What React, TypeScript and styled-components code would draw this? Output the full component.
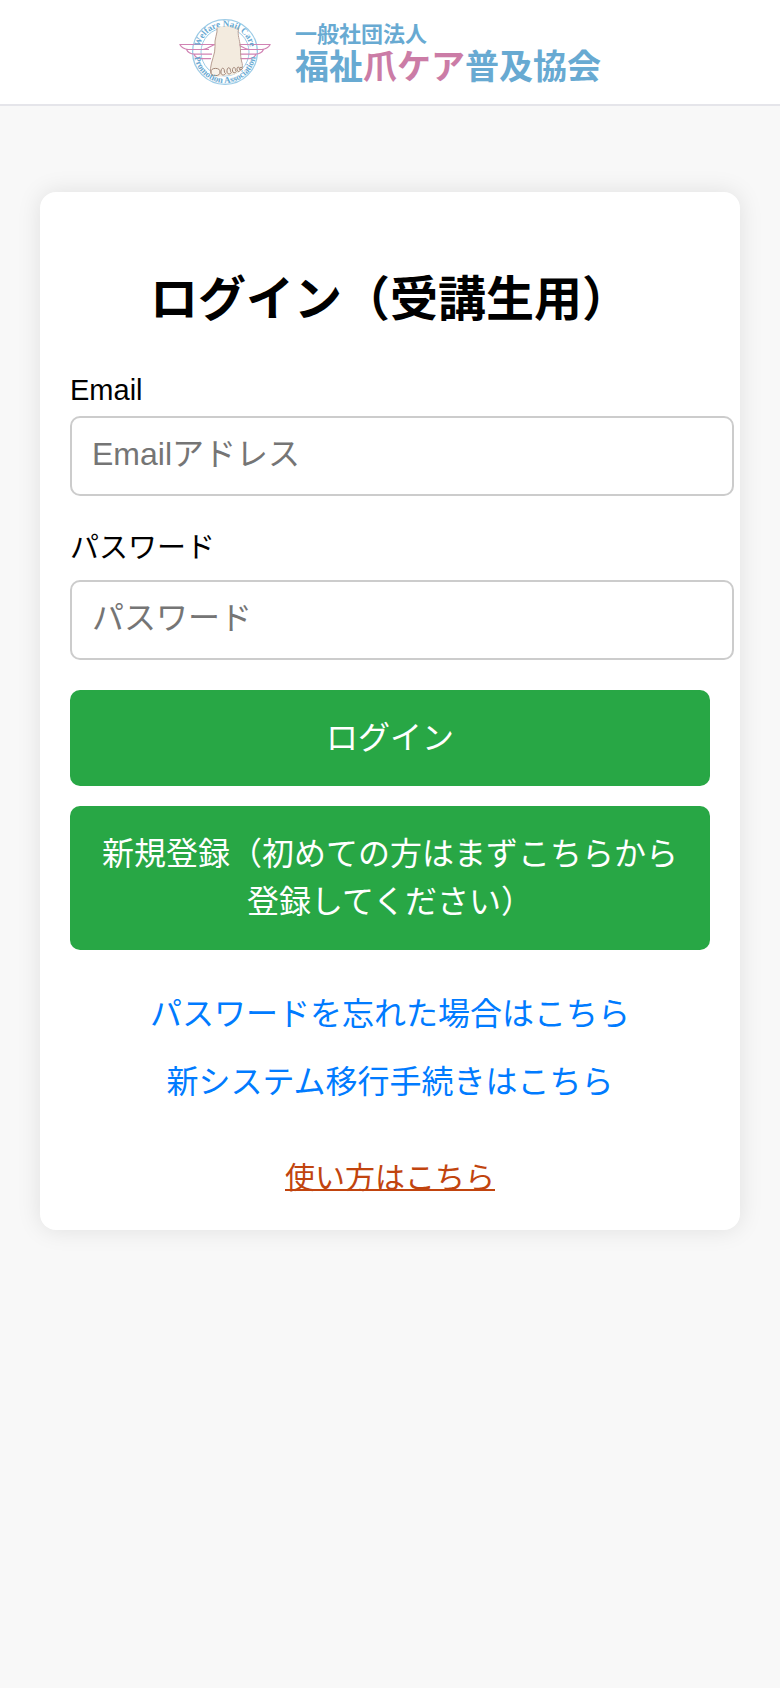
import React, { useState } from 'react';
import styled, { createGlobalStyle, css } from 'styled-components';

const GlobalStyle = createGlobalStyle`
	body {
		margin: 0;
		background-color: #f8f8f8;
		color: #000;
		font-family: 'Liberation Sans', 'Noto Sans CJK JP', sans-serif;
	}
`;

const Header = styled.header`
	display: flex;
	align-items: center;
	justify-content: center;
	gap: 24px;

	padding: 18px 20px;

	background-color: #fff;
	border-bottom: 2px solid #e5e5ea;
`;

const Mark = styled.svg`
	width: 92px;
	height: 68px;
	flex-shrink: 0;
`;

const RingText = styled.text`
	fill: #68a9d2;
	font-family: 'Liberation Serif', serif;
	font-size: 9px;
	font-weight: bold;
`;

const Organization = styled.div`
	padding-top: 4px;

	color: #68aad2;
	font-weight: bold;
	white-space: nowrap;
`;

const OrganizationType = styled.div`
	font-size: 22px;
	line-height: 26px;
`;

const OrganizationName = styled.div`
	font-size: 34px;
	line-height: 38px;
`;

const Accent = styled.span`
	color: #cb7ca6;
`;

const Card = styled.main`
	margin: 86px 40px 40px;
	padding: 72px 30px 28px;

	background-color: #fff;
	border-radius: 16px;
	box-shadow: 0 0 24px rgba(0, 0, 0, 0.1);
`;

const Title = styled.h1`
	margin: 0 0 38px;

	font-size: 48px;
	line-height: 72px;
	text-align: center;
`;

const Form = styled.form`
	display: flex;
	flex-direction: column;
`;

const Field = styled.div<{ $gap: number }>`
	display: flex;
	flex-direction: column;
	gap: ${({ $gap }) => $gap}px;

	& + & {
		margin-top: 36px;
	}
`;

const Label = styled.label`
	font-size: 29px;
	line-height: 32px;
`;

const Input = styled.input`
	box-sizing: border-box;
	width: calc(100% + 24px);
	height: 80px;
	padding: 0 20px 4px;

	font-family: inherit;
	font-size: 32px;

	background-color: #fff;
	border: 2px solid #ccc;
	border-radius: 10px;

	&::placeholder {
		color: #757575;
		opacity: 1;
	}
`;

const Actions = styled.div`
	display: flex;
	flex-direction: column;
	gap: 20px;
	margin-top: 30px;
`;

const Button = styled.button`
	padding: 24px;

	font-family: inherit;
	font-size: 32px;
	line-height: 48px;
	color: #fff;

	background-color: #28a745;
	border: none;
	border-radius: 10px;
	cursor: pointer;
`;

const Links = styled.nav`
	display: flex;
	flex-direction: column;
	align-items: center;
	gap: 20px;
	margin-top: 40px;
`;

const guideLink = css`
	margin-top: 28px;

	font-size: 30px;
	color: #c1440e;
	text-decoration: underline;
	text-decoration-thickness: 2px;
`;

const Link = styled.a<{ $guide?: boolean }>`
	font-size: 32px;
	line-height: 48px;
	color: #007bff;
	text-decoration: none;

	${({ $guide }) => $guide && guideLink};
`;

const LogoMark = () => (
	<Mark viewBox="0 0 92 68" role="img" aria-label="Welfare Nail Care Promotion Association">
		<defs>
			<path id="ring-top" d="M20.500 34a25.500 25.500 0 0 1 51 0" />
			<path id="ring-bottom" d="M15 34a31 31 0 0 0 62 0" />
		</defs>
		<g fill="none" stroke="#9ccbe6">
			<circle cx="46" cy="34" r="32.400" strokeWidth="1.300" />
			<circle cx="46" cy="34" r="24" strokeWidth="1" />
		</g>
		<g fill="none" stroke="#d183b4" strokeWidth="1.200" strokeLinejoin="round">
			<path d="M36 26.500H.8c2 3.500 5 4.800 8.500 5H30M7.500 31.500c1.500 3.500 4.500 4.500 8 4.700H33M15 36.200c1.500 3.300 4 4.300 7 4.500h10M36 26.500c-4 1-6 4-12 5" />
			<path d="M58 26.500h33.200c-2 3.500-5 4.800-8.500 5H62M84.500 31.500c-1.500 3.500-4.500 4.500-8 4.700H60M77 36.200c-1.500 3.300-4 4.300-7 4.500h-9M58 26.500c4 1 6 4 12 5" />
		</g>
		<path
			d="M38 9.500c1 6-3 11-2 19 .5 7-4 15-4.500 22-.3 4 .5 6.500 3 7.500 4 1.500 8 .5 11-.5 6 .5 12-1 16-4.500 2-2 1.500-6 .5-10-1.500-6-.5-10-1.500-17-1-6-3-10-1-16.500C54 7 44 7 38 9.500z"
			fill="#f3ebdf"
		/>
		<path
			d="M38 9.500c1 6-3 11-2 19 .5 7-4 15-4.500 22-.3 4 .5 6.500 3 7.500M60 9.500c-2 6.500 0 10 1 16.500 1 7 0 11 1.500 17 1 3 1.200 6 .5 8"
			fill="none"
			stroke="#b89e92"
			strokeWidth="1"
		/>
		<g fill="#f8f3ea" stroke="#a08475" strokeWidth="1">
			<ellipse cx="36.500" cy="54" rx="4.500" ry="3.600" />
			<path d="M42 55c-.2-3.500 1-5.500 2.500-4.500s0 4 2 5c-1 2-4 2.200-4.500-.5z" />
			<path d="M48 54c-.2-3 1-5 2.500-4s.2 3.500 1.800 4.500c-1 2-3.800 2-4.300-.5z" />
			<path d="M53.500 53c-.2-2.600 1-4.200 2.200-3.300s.1 3 1.500 3.900c-.8 1.700-3.300 1.600-3.700-.6z" />
			<path d="M58 52c-.2-2.200.8-3.500 1.800-2.800s.2 2.500 1.400 3.200c-.7 1.500-2.900 1.400-3.200-.4z" />
			<circle cx="62" cy="50.500" r="1.200" />
		</g>
		<RingText textAnchor="middle">
			<textPath href="#ring-top" startOffset="50%">Welfare Nail Care</textPath>
		</RingText>
		<RingText textAnchor="middle">
			<textPath href="#ring-bottom" startOffset="50%">Promotion Association</textPath>
		</RingText>
	</Mark>
);

const App = () => {
	const [email, setEmail] = useState('');
	const [password, setPassword] = useState('');

	return (
		<>
			<GlobalStyle />
			<Header>
				<LogoMark />
				<Organization>
					<OrganizationType>一般社団法人</OrganizationType>
					<OrganizationName>
						福祉<Accent>爪ケア</Accent>普及協会
					</OrganizationName>
				</Organization>
			</Header>
			<Card>
				<Title>ログイン（受講生用）</Title>
				<Form onSubmit={(e) => e.preventDefault()}>
					<Field $gap={10}>
						<Label htmlFor="email">Email</Label>
						<Input
							id="email"
							type="email"
							placeholder="Emailアドレス"
							value={email}
							onChange={(e) => setEmail(e.target.value)}
						/>
					</Field>
					<Field $gap={16}>
						<Label htmlFor="password">パスワード</Label>
						<Input
							id="password"
							type="password"
							placeholder="パスワード"
							value={password}
							onChange={(e) => setPassword(e.target.value)}
						/>
					</Field>
					<Actions>
						<Button type="submit">ログイン</Button>
						<Button type="button">
							新規登録（初めての方はまずこちらから登録してください）
						</Button>
					</Actions>
				</Form>
				<Links>
					<Link href="#reset">パスワードを忘れた場合はこちら</Link>
					<Link href="#migration">新システム移行手続きはこちら</Link>
					<Link href="#guide" $guide>
						使い方はこちら
					</Link>
				</Links>
			</Card>
		</>
	);
};

export default App;
